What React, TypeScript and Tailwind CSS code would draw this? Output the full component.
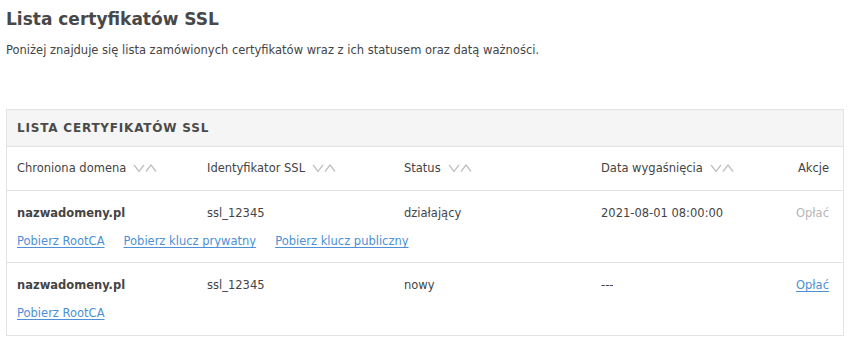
import React from 'react';

const SortIcon: React.FC = () => (
  <svg width="24" height="9" viewBox="0 0 24 9" className="ml-[7px] inline-block" fill="none" stroke="#c0c0c0" strokeWidth="1.3">
    <polyline points="1,1 6,7.5 11,1" />
    <polyline points="13,7.5 18,1 23,7.5" />
  </svg>
);

const Link: React.FC<{ children: React.ReactNode }> = ({ children }) => (
  <a href="#" className="text-[#4d90d6] underline underline-offset-2">
    {children}
  </a>
);

interface Cert {
  domain: string;
  id: string;
  status: string;
  expires: string;
  payable: boolean;
  links: string[];
}

const certs: Cert[] = [
  {
    domain: 'nazwadomeny.pl',
    id: 'ssl_12345',
    status: 'działający',
    expires: '2021-08-01 08:00:00',
    payable: false,
    links: ['Pobierz RootCA', 'Pobierz klucz prywatny', 'Pobierz klucz publiczny'],
  },
  {
    domain: 'nazwadomeny.pl',
    id: 'ssl_12345',
    status: 'nowy',
    expires: '---',
    payable: true,
    links: ['Pobierz RootCA'],
  },
];

const cols = 'grid grid-cols-[190px_197px_197px_1fr_auto] items-center';

export default function App() {
  return (
    <div className="bg-white px-[6px] pt-[5px] text-[11.5px] text-[#444] font-['DejaVu_Sans',Verdana,sans-serif]">
      <h1 className="text-[17px] font-bold leading-[28px] text-[#484848]">Lista certyfikatów SSL</h1>
      <p className="mt-[9px] leading-[16px]">
        Poniżej znajduje się lista zamówionych certyfikatów wraz z ich statusem oraz datą ważności.
      </p>

      <div className="mt-[51px] border border-[#e3e3e3]">
        <div className="h-[37px] flex items-center px-[10px] bg-[#f5f5f5] border-b border-[#e3e3e3] font-bold text-[12px] tracking-[0.8px] text-[#4a4a4a]">
          LISTA CERTYFIKATÓW SSL
        </div>

        <div className={`${cols} h-[44px] px-[10px] border-b border-[#e3e3e3]`}>
          <div className="flex items-center">Chroniona domena<SortIcon /></div>
          <div className="flex items-center">Identyfikator SSL<SortIcon /></div>
          <div className="flex items-center">Status<SortIcon /></div>
          <div className="flex items-center">Data wygaśnięcia<SortIcon /></div>
          <div className="pr-[4px]">Akcje</div>
        </div>

        {certs.map((c, i) => (
          <div key={i} className={`h-[72px] px-[10px] pt-[14px] ${i < certs.length - 1 ? 'border-b border-[#e3e3e3]' : ''}`}>
            <div className={`${cols} leading-[16px]`}>
              <div className="font-bold">{c.domain}</div>
              <div>{c.id}</div>
              <div>{c.status}</div>
              <div>{c.expires}</div>
              <div className="pr-[4px]">
                {c.payable ? <Link>Opłać</Link> : <span className="text-[#b5b5b5]">Opłać</span>}
              </div>
            </div>
            <div className="mt-[12px] flex gap-[19px] leading-[16px]">
              {c.links.map((l) => (
                <Link key={l}>{l}</Link>
              ))}
            </div>
          </div>
        ))}
      </div>
    </div>
  );
}
